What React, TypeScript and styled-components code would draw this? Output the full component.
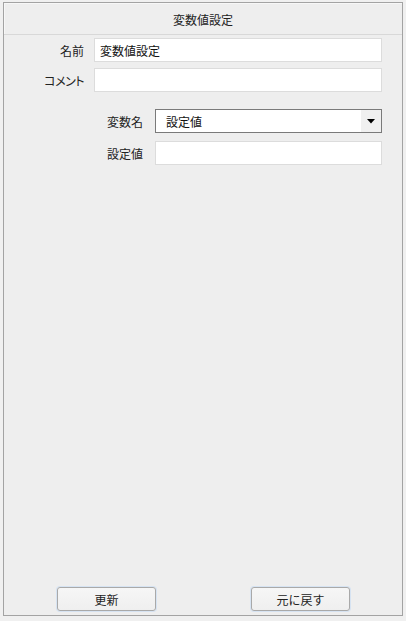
import React from "react";
import styled, { createGlobalStyle } from "styled-components";

const Global = createGlobalStyle`
  html, body { margin: 0; padding: 0; background: #f0f0f0; }
  body {
    font-family: "Noto Sans CJK JP", "Noto Sans", sans-serif;
    font-size: 12px;
    color: #222;
  }
  * { box-sizing: border-box; }
`;

const Panel = styled.div`
  margin: 2px 0 0 3px;
  width: 400px;
  height: 614px;
  border: 1px solid #a3a3a3;
  background: #eeeeee;
  display: flex;
  flex-direction: column;
`;

const Header = styled.div`
  height: 32px;
  border-bottom: 1px solid #d8d8d8;
  box-shadow: inset 1px 1px 0 #f7f7f7;
  display: flex;
  align-items: center;
  justify-content: center;
  color: #222;
  padding-top: 1px;
`;

const Group = styled.div<{ $labelW: number; $gap: number; $top: number; $rowGap: number }>`
  display: grid;
  grid-template-columns: ${(p) => p.$labelW}px 1fr;
  column-gap: ${(p) => p.$gap}px;
  row-gap: ${(p) => p.$rowGap}px;
  padding-right: 20px;
  margin-top: ${(p) => p.$top}px;
  align-items: center;
`;

const Label = styled.label<{ $narrow?: boolean }>`
  text-align: right;
  color: #222;
  white-space: nowrap;
  font-feature-settings: ${(p) => (p.$narrow ? '"palt"' : "normal")};
  letter-spacing: ${(p) => (p.$narrow ? "-0.5px" : "0")};
`;

const TextBox = styled.div`
  height: 24px;
  background: #ffffff;
  border: 1px solid #dcdcdc;
  display: flex;
  align-items: center;
  padding-left: 5px;
  color: #111;
`;

const Select = styled.div`
  height: 24px;
  background: #ffffff;
  border: 1px solid #7a7a7a;
  display: flex;
  align-items: stretch;
  color: #111;
`;

const SelectValue = styled.div`
  flex: 1;
  display: flex;
  align-items: center;
  padding-left: 10px;
`;

const SelectArrow = styled.div`
  width: 20px;
  background: #f0f0f0;
  display: flex;
  align-items: center;
  justify-content: center;
`;

const Footer = styled.div`
  margin-top: auto;
  margin-bottom: 4px;
  display: flex;
  padding-left: 53px;
  gap: 95px;
`;

const Button = styled.button`
  width: 99px;
  height: 24px;
  border: 1px solid #a9a9a9;
  border-radius: 3px;
  background: linear-gradient(#f6f6f6, #efefef);
  box-shadow: 0 0 0 1px #d6e3f2;
  font-family: inherit;
  font-size: 12px;
  color: #222;
  padding: 0;
`;

export default function App() {
  return (
    <>
      <Global />
      <Panel>
        <Header>変数値設定</Header>
        <Group $labelW={80} $gap={10} $top={3} $rowGap={6}>
          <Label>名前</Label>
          <TextBox>変数値設定</TextBox>
          <Label $narrow>コメント</Label>
          <TextBox />
        </Group>
        <Group $labelW={139} $gap={12} $top={17} $rowGap={8}>
          <Label>変数名</Label>
          <Select>
            <SelectValue>設定値</SelectValue>
            <SelectArrow>
              <svg width="8" height="5" viewBox="0 0 8 5">
                <path d="M0 0H8L4 4.5Z" fill="#000" />
              </svg>
            </SelectArrow>
          </Select>
          <Label>設定値</Label>
          <TextBox />
        </Group>
        <Footer>
          <Button>更新</Button>
          <Button>元に戻す</Button>
        </Footer>
      </Panel>
    </>
  );
}
